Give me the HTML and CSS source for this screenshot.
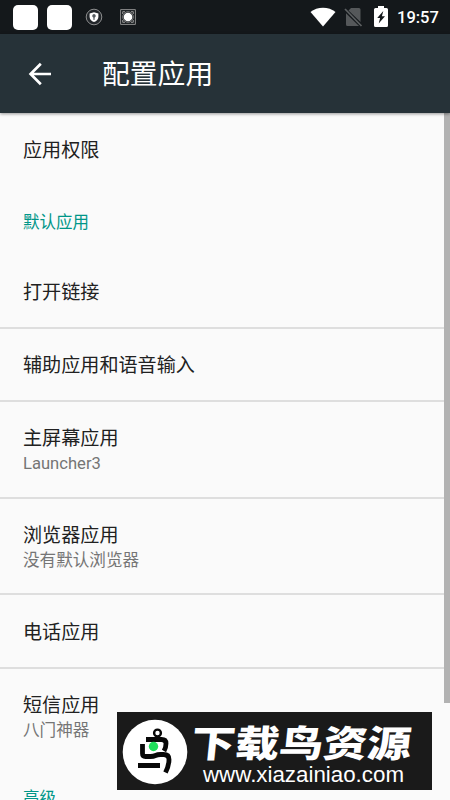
FILE: index.html
```html
<!DOCTYPE html>
<html lang="zh-CN">
<head>
<meta charset="utf-8">
<title>配置应用</title>
<link rel="stylesheet" href="styles.css">
</head>
<body>
<div class="screen">
  <header class="status">
    <div class="notifications">
      <span class="tile"></span>
      <span class="tile"></span>
      <svg class="shield" width="18" height="18" viewBox="0 0 18 18"><circle cx="9" cy="9" r="7.8" fill="#22262a" stroke="#aaa" stroke-width=".8"/><path d="M9 4.2 13.4 5.6V9c0 2.3-1.8 4-4.4 5.1C6.4 13 4.6 11.3 4.6 9V5.6Z" fill="#fff"/><path d="M9 6a1.9 1.9 0 0 1 .7 3.6L9.5 12h-1L8.3 9.6A1.9 1.9 0 0 1 9 6Z" fill="#555b60"/></svg>
      <svg class="record" width="16" height="16" viewBox="0 0 16 16"><path d="M.6.6h14.8v14.8H.6Z" fill="#181c1f" stroke="#999" stroke-width=".9"/><path d="M2.7 5V2.7H5M11 2.7h2.3V5M13.3 11v2.3H11M5 13.3H2.7V11" fill="none" stroke="#999"/><circle cx="8" cy="8" r="5.3" fill="none" stroke="#aaa" stroke-width=".7"/><circle cx="8" cy="8" r="4.3" fill="#fff"/></svg>
    </div>
    <div class="system">
      <svg class="wifi" width="26" height="20" viewBox="0 0 26 20"><path d="M.5 5C7-.7 19-.7 25.5 5L13 19.5Z" fill="#fff"/></svg>
      <svg class="sim" width="19" height="20" viewBox="0 0 19 20"><path d="M7 1h8q1.5 0 1.5 1.5V15L4.5 3.5ZM2 6.2 15 19H3.5Q2 19 2 17.5Z" fill="#55585a"/><path d="m1 2 16.5 17" stroke="#5d6062" stroke-width="1.7"/></svg>
      <svg class="battery" width="14" height="22" viewBox="0 0 14 22"><path d="M4 0h6v2h2.5Q14 2 14 3.5v16q0 1.5-1.5 1.5h-11Q0 21 0 19.5v-16Q0 2 1.5 2H4Z" fill="#fff"/><path d="M9.3 5 3.2 12h2.9l-1.4 5.5L11 10.2H7.9Z" fill="#14181b"/></svg>
      <span class="clock">19:57</span>
    </div>
  </header>
  <div class="appbar">
    <svg class="back" width="24" height="24" viewBox="0 0 24 24"><path d="M23 12H3M12.800 1.800 2.600 12l10.200 10.200" fill="none" stroke="#fff" stroke-width="2.700"/></svg>
    <h1>配置应用</h1>
  </div>
  <main class="list">
    <div class="item first">应用权限</div>
    <h2 class="section">默认应用</h2>
    <div class="item links">打开链接</div>
    <div class="item ruled">辅助应用和语音输入</div>
    <div class="item ruled double">主屏幕应用<small class="latin">Launcher3</small></div>
    <div class="item ruled double">浏览器应用<small>没有默认浏览器</small></div>
    <div class="item ruled">电话应用</div>
    <div class="item ruled double">短信应用<small>八门神器</small></div>
    <h2 class="section">高级</h2>
    <div class="scrollbar"></div>
  </main>
  <aside class="watermark">
    <svg class="logo" width="66" height="66" viewBox="0 0 66 66"><circle cx="33" cy="33" r="32.3" fill="#fff"/><g fill="none" stroke="#080808" stroke-width="4.8"><circle cx="35.5" cy="14" r="3.4" stroke-width="2.4"/><path d="M24 20.5h15.500q4.500 0 4.500 4 0 4-2 7.500M20.500 25v9.500q0 3 3 3h5q3 0 5-1t5-1h3q5.500 0 5.500 5 0 6-3.500 13M16 46.500h22"/></g><circle cx="31.500" cy="27.500" r="4.700" fill="#20df5b"/></svg>
    <div class="brand"><svg class="name" width="235" height="46"><text x="0" y="38" textLength="220" lengthAdjust="spacingAndGlyphs" transform="translate(6 0) skewX(-6)">下载鸟资源</text></svg><svg class="url" width="235" height="25"><text x="15" y="16.500" textLength="201" lengthAdjust="spacingAndGlyphs">www.xiazainiao.com</text></svg></div>
  </aside>
</div>
</body>
</html>
```

FILE: styles.css
```css
* { box-sizing: border-box; }
body { margin: 0; background: #fafafa; font-family: Roboto, "Noto Sans CJK SC", sans-serif; }
.screen { position: relative; display: flex; flex-direction: column; width: 450px; height: 800px; overflow: hidden; }
.status { flex: none; height: 34px; display: flex; align-items: center; justify-content: space-between; padding: 0 11px 0 13px; background: #14181b; }
.notifications, .system { display: flex; align-items: center; }
.tile { width: 25px; height: 25px; margin-right: 9px; border-radius: 5px; background: #fff; }
.shield { margin-left: 4px; }
.record { margin-left: 17px; }
.sim { margin-left: 8px; }
.battery { margin-left: 11px; }
.clock { margin-left: 9px; padding-top: 1px; color: #fff; font-size: 16.5px; font-weight: 500; line-height: 33px; width: 42px; white-space: nowrap; }
.appbar { position: relative; z-index: 1; flex: none; height: 79px; display: flex; align-items: center; gap: 50px; padding-left: 28px; background: #263238; box-shadow: 0 1px 3px rgba(0,0,0,.4); }
h1 { margin: 0; padding-top: 2px; color: #fff; font-size: 27.8px; font-weight: 400; line-height: 40px; }
.list { position: relative; flex: 1; overflow: hidden; }
.item { display: flex; flex-direction: column; justify-content: center; height: 73.5px; padding: 4px 0 0 23px; color: #212121; font-size: 19.1px; line-height: 26px; }
.first { padding-top: 3px; }
.links { height: 72.5px; padding-top: 6px; }
.ruled { border-top: 2px solid #dedede; }
.double { height: 96.5px; }
small { color: #757575; font-size: 16.6px; line-height: 24px; }
.section { height: 67.5px; margin: 0; padding-left: 23px; color: #009688; font-size: 16.5px; font-weight: 400; line-height: 71px; }
.scrollbar { position: absolute; top: 0; right: 0; width: 6px; height: 590px; background: #b2b2b2; }
.watermark { position: absolute; left: 117px; top: 712px; width: 315px; height: 78px; display: flex; padding: 7px 0 0 5px; background: #1a1a1a; overflow: hidden; }
.logo { flex: none; }
.brand { display: flex; flex-direction: column; }
.name { font: 900 37px "Noto Sans CJK SC", sans-serif; fill: #fff; }
.url { font: 22px "Liberation Sans", sans-serif; fill: #fff; }
```
